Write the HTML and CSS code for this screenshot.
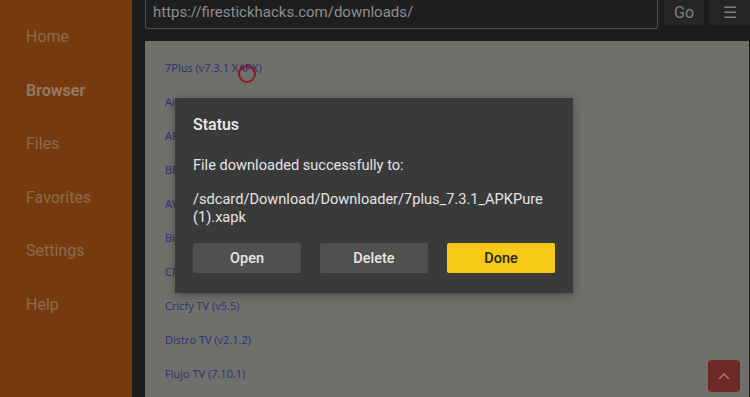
FILE: index.html
```html
<!DOCTYPE html>
<html lang="en">
<head>
	<meta charset="UTF-8">
	<meta name="viewport" content="width=device-width, initial-scale=1">
	<title>Downloader - Browser</title>
	<link rel="stylesheet" href="styles.css">
</head>
<body>

	<nav class="sidebar">
		<a class="nav-item">Home</a>
		<a class="nav-item active">Browser</a>
		<a class="nav-item">Files</a>
		<a class="nav-item">Favorites</a>
		<a class="nav-item">Settings</a>
		<a class="nav-item">Help</a>
	</nav>

	<main class="main">
		<div class="topbar">
			<div class="urlbox">https://firestickhacks.com/downloads/</div>
			<button class="tbtn go">Go</button>
			<button class="tbtn menu">&#9776;</button>
		</div>

		<div class="page">
			<ul class="links">
				<li><a>7Plus (v7.3.1 XAPK)</a></li>
				<!-- these rows sit under the dialog, only their first letters show -->
				<li class="covered"><a>Aircast (v3.2.0)</a></li>
				<li class="covered"><a>APKPure (v3.19.6)</a></li>
				<li class="covered"><a>BBC iPlayer (v4.160)</a></li>
				<li class="covered"><a>AVIA Player (v8.2)</a></li>
				<li class="covered"><a>BitChute (v1.1)</a></li>
				<li class="covered"><a>CNN Go (v3.5.0)</a></li>
				<li><a>Cricfy TV (v5.5)</a></li>
				<li><a>Distro TV (v2.1.2)</a></li>
				<li><a>Flujo TV (7.10.1)</a></li>
			</ul>
			<span class="cursor"></span>
		</div>

		<button class="totop">
			<svg width="12" height="8" viewBox="0 0 12 8"><path d="M1 7 L6 2 L11 7" fill="none" stroke="#a8766c" stroke-width="1.5"/></svg>
		</button>
	</main>

	<div class="dialog">
		<h2 class="dlg-title">Status</h2>
		<p class="dlg-text">File downloaded successfully to:</p>
		<p class="dlg-path">/sdcard/Download/Downloader/7plus_7.3.1_APKPure (1).xapk</p>
		<div class="dlg-buttons">
			<button class="dbtn">Open</button>
			<button class="dbtn">Delete</button>
			<button class="dbtn primary">Done</button>
		</div>
	</div>

</body>
</html>
```

FILE: styles.css
```css
html, body {
	margin: 0;
	height: 100%;
}

body {
	display: flex;
	background: #1c1c1c;
	font-family: Roboto, "Liberation Sans", sans-serif;
	overflow: hidden;
}

.sidebar {
	width: 132px;
	flex: none;
	background: #773a0e;
	display: flex;
	flex-direction: column;
	padding-top: 26px;
	box-sizing: border-box;
}

.nav-item {
	display: block;
	padding-left: 26px;
	height: 53.5px;
	font-size: 16px;
	line-height: 22px;
	color: #8d6a50;
}

.nav-item.active {
	font-weight: bold;
	color: #93785f;
}

.main {
	flex: 1;
	padding-left: 13px;
	position: relative;
	display: flex;
	flex-direction: column;
}

.topbar {
	display: flex;
	height: 30px;
	align-items: flex-start;
}

.urlbox {
	width: 513px;
	height: 29px;
	box-sizing: border-box;
	border: 1px solid #4e4e4e;
	border-top: none;
	border-radius: 0 0 3px 3px;
	background: #1e1e1e;
	color: #8e8e8e;
	font-size: 15px;
	line-height: 24px;
	padding-left: 7px;
}

.tbtn {
	border: none;
	background: #262626;
	color: #7f7f7f;
	font-family: inherit;
	height: 25px;
	padding: 0;
	margin-left: 5px;
	border-radius: 0 0 2px 2px;
}

.go {
	width: 40px;
	margin-left: 6px;
	font-size: 16px;
}

.menu {
	width: 42px;
	font-size: 16px;
}

.page {
	margin-top: 12px;
	margin-right: 2px;
	flex: 1;
	background: #6f706b;
	position: relative;
}

.links {
	list-style: none;
	margin: 0;
	padding: 19px 0 0 20px;
}

.links li {
	height: 34px;
	font-family: "Open Sans", sans-serif;
	font-size: 11px;
	line-height: 16px;
}

.links a {
	color: #2f2f74;
}

.links .covered a {
	display: inline-block;
	max-width: 10px;
	overflow: hidden;
	white-space: nowrap;
	vertical-align: top;
}

.cursor {
	position: absolute;
	left: 93px;
	top: 24px;
	width: 14px;
	height: 14px;
	border: 2px solid #861b1b;
	border-radius: 50%;
}

.totop {
	position: absolute;
	left: 576px;
	top: 360px;
	width: 32px;
	height: 32px;
	border: none;
	border-radius: 4px;
	background: #6f2828;
	padding: 0;
	display: flex;
	align-items: center;
	justify-content: center;
}

.dialog {
	position: absolute;
	left: 175px;
	top: 98px;
	width: 398px;
	height: 195px;
	box-sizing: border-box;
	background: #3a3a3a;
	padding: 17px 18px 0 18px;
	color: #e4e4e4;
	box-shadow: 0 2px 8px rgba(0, 0, 0, 0.35);
}

.dlg-title {
	margin: 0;
	font-size: 16px;
	font-weight: 500;
	line-height: 20px;
	color: #ececec;
}

.dlg-text {
	margin: 21px 0 0 0;
	font-size: 14.6px;
	line-height: 18px;
}

.dlg-path {
	margin: 16px 0 0 0;
	font-size: 14.6px;
	line-height: 18px;
	width: 360px;
}

.dlg-buttons {
	display: flex;
	gap: 19px;
	margin-top: 17px;
}

.dbtn {
	width: 108px;
	height: 30px;
	border: none;
	border-radius: 2px;
	background: #50504e;
	color: #e6e6e6;
	font-family: inherit;
	font-size: 14.5px;
	font-weight: 500;
	padding: 0;
}

.dbtn.primary {
	background: #f6c915;
	color: #2a2410;
}
```
